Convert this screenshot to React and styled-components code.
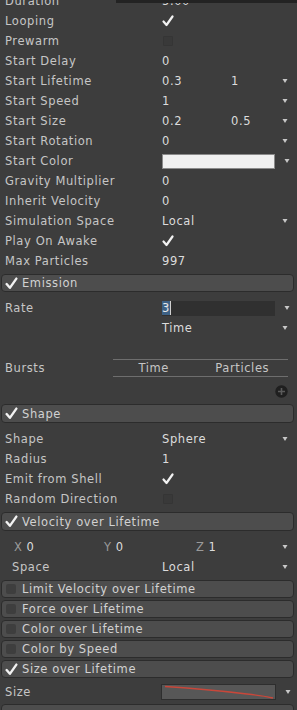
import React from "react";
import styled, { createGlobalStyle } from "styled-components";

const Global = createGlobalStyle`
  html, body { margin: 0; padding: 0; background: #3d3d3d; overflow: hidden; }
  body { font-family: "DejaVu Sans", "Liberation Sans", sans-serif; font-size: 11.5px; color: #c6c6c6; }
`;

const Panel = styled.div`
  position: relative;
  width: 297px;
  height: 710px;
  overflow: hidden;
  background: #3d3d3d;
  display: flex;
  flex-direction: column;
  & > :first-child { margin-top: -10px; }
`;

const TopShade = styled.div`
  position: absolute;
  top: 0;
  left: 116px;
  right: 0;
  height: 3px;
  background: #232323;
`;

const Row = styled.div`
  display: flex;
  align-items: center;
  height: 20px;
  box-sizing: border-box;
  padding-top: 2px;
  flex: none;
  padding-left: ${(p) => p.$indent || 5}px;
`;

const Label = styled.div`
  width: ${(p) => p.$w || 157}px;
  flex: none;
  letter-spacing: 0.6px;
  color: #c6c6c6;
  white-space: nowrap;
`;

const Value = styled.div`
  width: ${(p) => (p.$w ? p.$w + "px" : "auto")};
  flex: ${(p) => (p.$w ? "none" : "1")};
  letter-spacing: 0.6px;
  color: #dcdcdc;
  white-space: nowrap;
  display: flex;
  align-items: center;
`;

const ArrowSlot = styled.div`
  width: 24px;
  flex: none;
  margin-left: auto;
  display: flex;
  justify-content: center;
  align-items: center;
`;

const ColorField = styled.div`
  width: 111px;
  height: 13px;
  background: #f0f0f0;
  border: 1px solid #8a8a8a;
  flex: none;
`;

const RateField = styled.div`
  width: 113px;
  height: 15px;
  background: #303030;
  display: flex;
  align-items: center;
  flex: none;
`;

const Sel = styled.span`
  background: #3d6185;
  color: #e8e8e8;
  padding: 0 1px 0 0;
  line-height: 14px;
  border-right: 1px solid #d0d0d0;
`;

const Box = styled.div`
  width: 8px;
  height: 8px;
  border: 1px solid #353535;
  background: #393939;
  border-radius: 1px;
  margin-left: 1px;
`;

const Header = styled.div`
  display: flex;
  align-items: center;
  height: ${(p) => p.$h || 18}px;
  flex: none;
  margin: ${(p) => p.$m || "4px 3px 5px 1px"};
  background: #4d4d4d;
  border: 1px solid #2c2c2c;
  border-radius: 4px;
  box-sizing: border-box;
  padding-left: 2px;
  color: #d2d2d2;
  letter-spacing: 0.6px;
`;

const HeaderMark = styled.div`
  width: 14px;
  height: 14px;
  flex: none;
  display: flex;
  align-items: center;
  justify-content: center;
  margin-right: 4px;
`;

const HeaderBox = styled.div`
  width: 10px;
  height: 10px;
  background: #3e3e3e;
  border-radius: 2px;
`;

const Gap = styled.div`
  height: ${(p) => p.$h}px;
  flex: none;
`;

const BurstTable = styled.div`
  margin-left: ${113 - 5 - 45}px;
  width: 175px;
  height: 18px;
  border-top: 1px solid #6e6e6e;
  border-bottom: 1px solid #6e6e6e;
  display: grid;
  grid-template-columns: 1fr 1fr;
  align-items: center;
  box-sizing: border-box;
  letter-spacing: 0.6px;
  color: #c6c6c6;
  & > span { text-align: center; }
  & > span:first-child { padding-right: 6px; }
  & > span:last-child { padding-right: 4px; }
`;

const PlusRow = styled.div`
  height: 20px;
  flex: none;
  display: flex;
  justify-content: flex-end;
  align-items: center;
  padding-right: 9px;
`;

const Axis = styled.span`
  color: #9a9a9a;
  margin-right: 4px;
`;

const AxisCell = styled.div`
  width: ${(p) => p.$w}px;
  flex: none;
  display: flex;
  letter-spacing: 0.6px;
  color: #dcdcdc;
`;

const CurveBox = styled.div`
  width: 113px;
  height: 14px;
  background: #575757;
  border: 1px solid #2e2e2e;
  flex: none;
  display: flex;
`;

const Check = ({ size = 12 }) => (
  <svg width={size} height={size} viewBox="0 0 12 12">
    <path d="M1.5 6.5 L4.5 10 L10.5 1.5" fill="none" stroke="#f2f2f2" strokeWidth="2.2" strokeLinecap="round" strokeLinejoin="round" />
  </svg>
);

const Arrow = () => (
  <svg width="6" height="6" viewBox="0 0 6 6">
    <path d="M0.5 1 L5.5 1 L3 5 Z" fill="#c8c8c8" />
  </svg>
);

const Plus = () => (
  <svg width="13" height="13" viewBox="0 0 13 13">
    <circle cx="6.5" cy="6.5" r="6.2" fill="#1f1f1f" />
    <path d="M6.5 3 V10 M3 6.5 H10" stroke="#5a5a5a" strokeWidth="1.6" />
  </svg>
);

const Curve = () => (
  <svg width="113" height="14" viewBox="0 0 113 14">
    <path d="M3 1.5 C 30 3, 60 6, 85 9 S 105 12, 111 13" fill="none" stroke="#c8473a" strokeWidth="1.4" />
  </svg>
);

const mainRows = [
  { l: "Duration", v: "5.00" },
  { l: "Looping", check: true },
  { l: "Prewarm", box: true },
  { l: "Start Delay", v: "0" },
  { l: "Start Lifetime", v: "0.3", v2: "1", arrow: true },
  { l: "Start Speed", v: "1", arrow: true },
  { l: "Start Size", v: "0.2", v2: "0.5", arrow: true },
  { l: "Start Rotation", v: "0", arrow: true },
  { l: "Start Color", color: true, arrow: true },
  { l: "Gravity Multiplier", v: "0" },
  { l: "Inherit Velocity", v: "0" },
  { l: "Simulation Space", v: "Local", arrow: true },
  { l: "Play On Awake", check: true },
  { l: "Max Particles", v: "997" },
];

const PropRow = ({ r }) => (
  <Row>
    <Label>{r.l}</Label>
    {r.check && <Value><Check /></Value>}
    {r.box && <Value><Box /></Value>}
    {r.color && <ColorField />}
    {r.v !== undefined && <Value $w={r.v2 ? 69 : undefined}>{r.v}</Value>}
    {r.v2 && <Value>{r.v2}</Value>}
    {r.arrow && <ArrowSlot><Arrow /></ArrowSlot>}
  </Row>
);

const SectionHeader = ({ on, children, ...p }) => (
  <Header {...p}>
    <HeaderMark>{on ? <Check size={13} /> : <HeaderBox />}</HeaderMark>
    {children}
  </Header>
);

export default function App() {
  return (
    <>
      <Global />
      <Panel>
        {mainRows.map((r) => (
          <PropRow key={r.l} r={r} />
        ))}
        <SectionHeader on>Emission</SectionHeader>
        <Row>
          <Label>Rate</Label>
          <RateField><Sel>3</Sel></RateField>
          <ArrowSlot><Arrow /></ArrowSlot>
        </Row>
        <Row>
          <Label />
          <Value>Time</Value>
          <ArrowSlot><Arrow /></ArrowSlot>
        </Row>
        <Gap $h={20} />
        <Row>
          <Label $w={45}>Bursts</Label>
          <BurstTable><span>Time</span><span>Particles</span></BurstTable>
        </Row>
        <Gap $h={4} />
        <PlusRow><Plus /></PlusRow>
        <SectionHeader on $h={19} $m="3px 3px 5px 1px">Shape</SectionHeader>
        <PropRow r={{ l: "Shape", v: "Sphere", arrow: true }} />
        <PropRow r={{ l: "Radius", v: "1" }} />
        <PropRow r={{ l: "Emit from Shell", check: true }} />
        <PropRow r={{ l: "Random Direction", box: true }} />
        <SectionHeader on $h={19}>Velocity over Lifetime</SectionHeader>
        <Row $indent={14}>
          <AxisCell $w={90}><Axis>X</Axis>0</AxisCell>
          <AxisCell $w={92}><Axis>Y</Axis>0</AxisCell>
          <AxisCell $w={60}><Axis>Z</Axis>1</AxisCell>
          <ArrowSlot><Arrow /></ArrowSlot>
        </Row>
        <Row $indent={12}>
          <Label $w={150}>Space</Label>
          <Value>Local</Value>
          <ArrowSlot><Arrow /></ArrowSlot>
        </Row>
        <SectionHeader $m="4px 3px 2px 1px">Limit Velocity over Lifetime</SectionHeader>
        <SectionHeader $m="0 3px 2px 1px">Force over Lifetime</SectionHeader>
        <SectionHeader $m="0 3px 2px 1px">Color over Lifetime</SectionHeader>
        <SectionHeader $m="0 3px 2px 1px">Color by Speed</SectionHeader>
        <SectionHeader on $m="0 3px 3px 1px">Size over Lifetime</SectionHeader>
        <Row>
          <Label $w={156}>Size</Label>
          <CurveBox><Curve /></CurveBox>
          <ArrowSlot><Arrow /></ArrowSlot>
        </Row>
        <Header $m="3px 3px 0 1px" />
        <TopShade />
      </Panel>
    </>
  );
}
